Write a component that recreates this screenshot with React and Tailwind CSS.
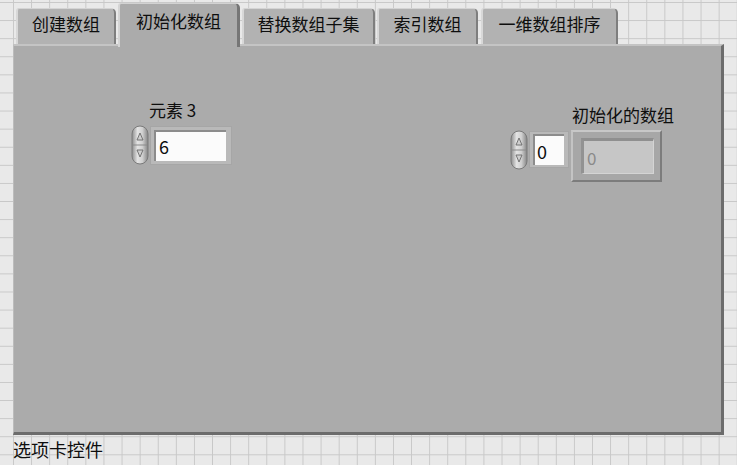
import React from "react";

const font = "font-['Noto_Sans_CJK_SC','Noto_Sans',sans-serif]";

function Spinner() {
  return (
    <svg width="18" height="40" viewBox="0 0 18 40">
      <defs>
        <linearGradient id="cyl" x1="0" y1="0" x2="1" y2="0">
          <stop offset="0" stopColor="#8e8e8e" />
          <stop offset="0.35" stopColor="#e4e4e4" />
          <stop offset="0.65" stopColor="#d0d0d0" />
          <stop offset="1" stopColor="#858585" />
        </linearGradient>
      </defs>
      <rect x="1" y="1" width="16" height="38" rx="8" fill="url(#cyl)" stroke="#7a7a7a" strokeWidth="1" />
      <line x1="2" y1="20" x2="16" y2="20" stroke="#8a8a8a" strokeWidth="1" />
      <path d="M6 15 L9 8 L12 15 Z" fill="#cfcfcf" stroke="#6a6a6a" strokeWidth="0.9" strokeLinejoin="round" />
      <path d="M6 25 L9 32 L12 25 Z" fill="#cfcfcf" stroke="#6a6a6a" strokeWidth="0.9" strokeLinejoin="round" />
    </svg>
  );
}

function Tab({ label, w, ml, active }) {
  if (active) {
    return (
      <div
        className={`relative z-10 h-[44px] -mb-[3px] ${w} ${ml} bg-[#ababab] border-l-2 border-l-[#d4d4d4] border-t border-t-[#d2d2d2] border-r-[3px] border-r-[#767676] rounded-tl-[3px] rounded-tr-[5px] flex justify-center pt-[8px]`}
      >
        <span className="text-[17px] leading-none text-[#0e0e0e]">{label}</span>
      </div>
    );
  }
  return (
    <div
      className={`h-[36px] ${w} ${ml} bg-[#b2b2b2] border-l-2 border-l-[#d8d8d8] border-t border-t-[#d4d4d4] border-r-2 border-r-[#7e7e7e] rounded-tl-[3px] rounded-tr-[5px] flex justify-center pt-[6px]`}
    >
      <span className="text-[17px] leading-none text-[#0e0e0e]">{label}</span>
    </div>
  );
}

export default function App() {
  return (
    <div
      className={`${font} w-[737px] h-[465px] overflow-hidden bg-[#e9e9e9] bg-[linear-gradient(to_right,#c8c8c8_1px,transparent_1px),linear-gradient(to_bottom,#c8c8c8_1px,transparent_1px)] bg-[size:18.1px_18.1px] bg-[position:13px_2px] pt-[3px] pl-[13px]`}
    >
      <div className="flex items-end h-[41px] pl-[3px]">
        <Tab label="创建数组" w="w-[100px]" ml="ml-0" />
        <Tab label="初始化数组" w="w-[122px]" ml="ml-[2px]" active />
        <Tab label="替换数组子集" w="w-[133px]" ml="ml-[2px]" />
        <Tab label="索引数组" w="w-[101px]" ml="ml-[2px]" />
        <Tab label="一维数组排序" w="w-[137px]" ml="ml-[3px]" />
      </div>

      <div className="relative w-[711px] h-[391px] bg-[#ababab] border-t-2 border-t-[#c4c4c4] border-l border-l-[#bcbcbc] border-r-[3px] border-r-[#6c6c6c] border-b-[3px] border-b-[#6c6c6c]">
        {/* 元素 3 control */}
        <div className="absolute left-[135px] top-[55px] text-[17px] leading-none text-[#0e0e0e]">元素 3</div>
        <div className="absolute left-[117px] top-[79px] flex items-center">
          <Spinner />
          <div className="ml-[1px] w-[82px] h-[39px] bg-[#b9b9b9] border border-[#a6a6a6] pl-[3px] pt-[3px] pr-[5px] pb-[3px]">
            <div className="w-full h-full bg-[#fbfbfb] border-t-2 border-l-2 border-[#8c8c8c] flex items-center pl-[3px] text-[18px] leading-none text-[#0e0e0e]">
              6
            </div>
          </div>
        </div>

        {/* 初始化的数组 indicator */}
        <div className="absolute left-[558px] top-[60px] text-[17px] leading-none text-[#0e0e0e]">初始化的数组</div>
        <div className="absolute left-[496px] top-[84px] flex items-start">
          <Spinner />
          <div className="ml-[1px] mt-[1px] w-[40px] h-[37px] bg-[#b9b9b9] border border-[#a6a6a6] pl-[3px] pt-[2px] pr-[4px] pb-[2px]">
            <div className="w-full h-full bg-[#fbfbfb] border-t-2 border-l-2 border-[#8c8c8c] flex items-center pl-[2px] text-[18px] leading-none text-[#0e0e0e]">
              0
            </div>
          </div>
          <div className="ml-[2px] w-[91px] h-[52px] bg-[#a7a7a7] border-t-2 border-l-2 border-t-[#c8c8c8] border-l-[#c4c4c4] border-r-2 border-b-2 border-r-[#7c7c7c] border-b-[#7c7c7c] p-[6px] pl-[8px]">
            <div className="w-full h-full bg-[#c6c6c6] border-t-[3px] border-l-[3px] border-t-[#8f8f8f] border-l-[#929292] border-r border-b border-r-[#d4d4d4] border-b-[#d4d4d4] flex items-center pl-[3px] text-[17px] leading-none text-[#8a8a8a]">
              0
            </div>
          </div>
        </div>
      </div>

      <div className="mt-[5px] text-[18px] leading-none text-[#0e0e0e]">选项卡控件</div>
    </div>
  );
}
